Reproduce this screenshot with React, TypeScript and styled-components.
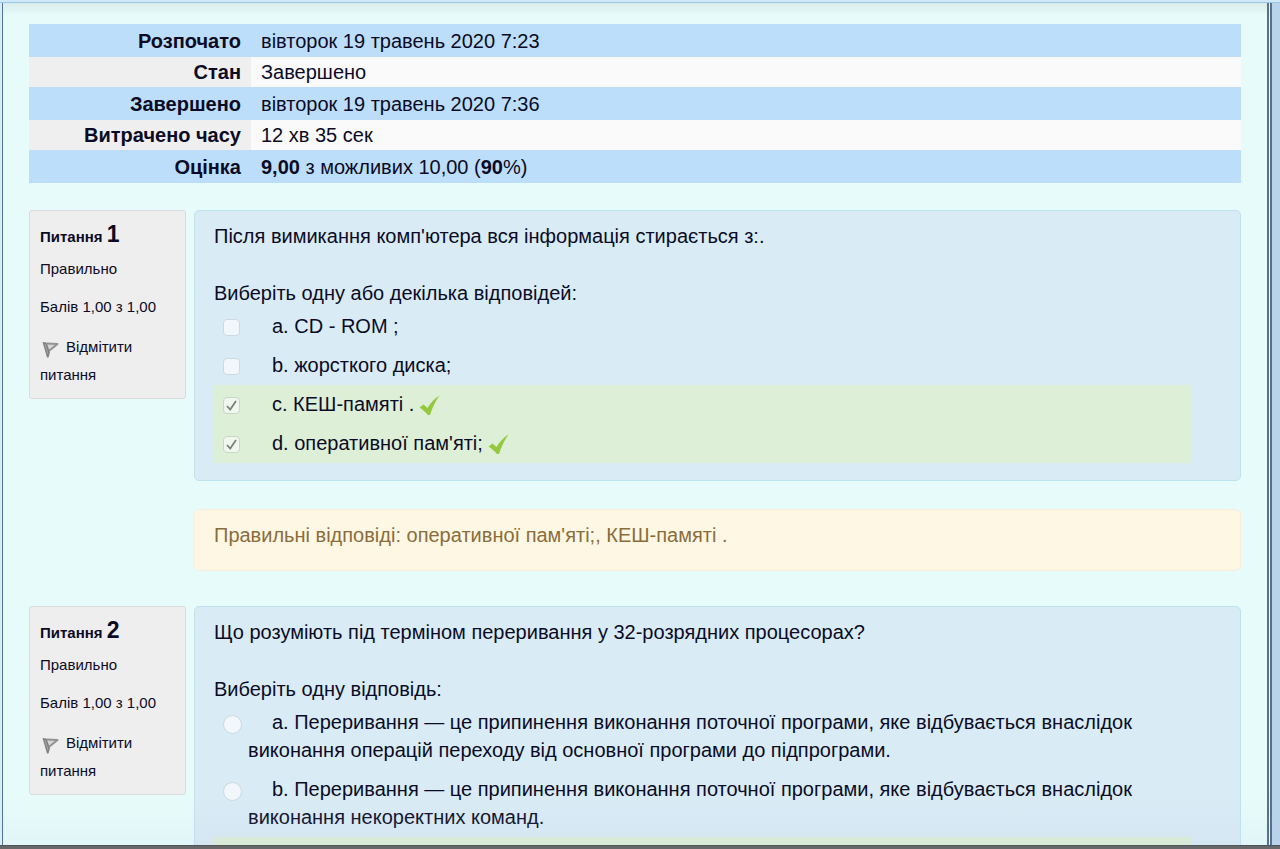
import React from "react";
import styled, { createGlobalStyle } from "styled-components";

const GlobalStyle = createGlobalStyle`
  * { box-sizing: border-box; }
  body {
    margin: 0;
    background: #b9d3ea;
    color: #0b0b26;
    font-family: "Liberation Sans", Arial, sans-serif;
    font-size: 20px;
    line-height: 28px;
  }
`;

const Window = styled.div`
  display: flex;
  flex-direction: column;
  height: 100vh;
  overflow: hidden;
`;

const TopBar = styled.div`
  flex: none;
  height: 3px;
  background: #cfe8fa;
  border-bottom: 1px solid #9cc6e2;
`;

const BottomBar = styled.div`
  flex: none;
  height: 4px;
  background: #666769;
  border-top: 1px solid #4d5356;
`;

const Viewport = styled.div`
  flex: 1;
  min-height: 0;
  display: flex;
  padding: 0 8px 0 2px;
  background: linear-gradient(to right, #d3effa 2px, #b9d3ea 2px);
`;

const Page = styled.main`
  position: relative;
  flex: 1;
  min-width: 0;
  overflow: hidden;
  padding: 21px 26px 0;
  background: #e7fcfa;
  border-left: 1px solid #54759a;
  border-right: 5px double #58718f;

  &::before,
  &::after {
    content: "";
    position: absolute;
    left: 0;
    right: 0;
    pointer-events: none;
  }
  &::before {
    top: 0;
    height: 12px;
    background: linear-gradient(to bottom, rgba(205, 225, 220, 0.6), rgba(205, 225, 220, 0));
  }
  &::after {
    bottom: 0;
    height: 48px;
    background: linear-gradient(to bottom, rgba(190, 205, 225, 0), rgba(190, 205, 225, 0.15));
  }
`;

const Summary = styled.table`
  width: 100%;
  border-collapse: collapse;
  margin-bottom: 27px;
`;

const SummaryRow = styled.tr`
  background: #fafafa;

  th {
    width: 222px;
    padding: 0 10px 0 0;
    background: #efefef;
    text-align: right;
    line-height: 30px;
  }
  td {
    padding: 0 10px;
    line-height: 30px;
  }
  &:nth-child(odd) {
    background: #bddefa;
  }
  &:nth-child(odd) th,
  &:nth-child(odd) td {
    background: #bddefa;
    padding-top: 1px;
    line-height: 32px;
  }
`;

const Question = styled.section`
  display: grid;
  grid-template-columns: 157px minmax(0, 1fr);
  column-gap: 8px;
  align-items: start;
  margin-bottom: 35px;
`;

const Info = styled.aside`
  min-height: 188px;
  padding: 9px 10px;
  border: 1px solid #d9dcda;
  border-radius: 3px;
  background: #eeeeee;
  font-size: 15px;
`;

const Heading = styled.h3`
  margin: 0 0 6px;
  font-size: 15px;
  line-height: 28px;

  span {
    font-size: 23px;
  }
`;

const InfoLine = styled.p`
  margin: 0 0 14px;
  line-height: 24px;
`;

const FlagLink = styled.a`
  display: block;
  color: inherit;
  text-decoration: none;
  line-height: 28px;

  svg {
    margin-right: 3px;
    vertical-align: -7px;
  }
`;

const Body = styled.div`
  min-width: 0;
`;

const Formulation = styled.div`
  padding: 11px 48px 17px 19px;
  border: 1px solid #bfe3ee;
  border-radius: 5px;
  background: #d9ebf5;
`;

const Text = styled.p`
  margin: 0 0 29px;
`;

const Answers = styled.fieldset`
  min-width: 0;
  margin: 0;
  padding: 0;
  border: 0;
`;

const Prompt = styled.legend`
  padding: 0;
`;

const AnswerRow = styled.label<{ $correct?: boolean }>`
  display: grid;
  grid-template-columns: 17px minmax(0, 1fr);
  column-gap: 8px;
  align-items: start;
  padding: 5px 0 6px 9px;
  background: ${(p) => (p.$correct ? "#ddefd6" : "transparent")};
`;

const AnswerText = styled.span`
  text-indent: 24px;

  svg {
    margin-left: 5px;
    vertical-align: -5px;
  }
`;

const Mark = styled.span`
  display: grid;
  place-items: center;
  padding-top: 7px;

  > * {
    grid-area: 1 / 1;
  }
`;

const Choice = styled.input<{ $round?: boolean }>`
  appearance: none;
  width: ${(p) => (p.$round ? "19px" : "17px")};
  height: ${(p) => (p.$round ? "19px" : "17px")};
  margin: 0;
  border: 1px solid #cdd9df;
  border-radius: ${(p) => (p.$round ? "50%" : "4px")};
  background: #f1f7fa;

  &:checked {
    border-color: #c9d6c6;
    background: #f0f7ee;
  }
`;

const Feedback = styled.div`
  min-height: 62px;
  margin-top: 28px;
  padding: 11px 19px;
  border: 1px solid #faeeda;
  border-radius: 5px;
  background: #fef7e3;
  color: #8a6d3b;
`;

const Flag = () => (
  <svg width="23" height="20" viewBox="0 0 23 20" fill="none" aria-hidden="true">
    <path d="M7 4.500L17.500 5L9.500 11.500" fill="#d6d6d6" stroke="#929292" strokeWidth="2" strokeLinejoin="round" />
    <path d="M2.500 3L6.500 3.500L10 13L8.500 18.500H7Z" fill="#808080" />
    <path d="M5 5L8 15" stroke="#a9a9a9" strokeWidth="1" />
  </svg>
);

const Correct = () => (
  <svg width="21" height="21" viewBox="0 0 21 21" role="img" aria-label="Правильно">
    <path d="M0.500 12.500L4.500 9.500L8.500 13C11.500 8 15.500 3.500 20.500 0.500C16.500 6 13.500 12.500 11 20H9C6.500 17 3.500 14.500 0.500 12.500Z" fill="#94c83d" />
  </svg>
);

const Tick = () => (
  <svg width="17" height="17" viewBox="0 0 17 17" fill="none" aria-hidden="true">
    <path d="M4 9L7.200 12.500L13 4" stroke="#78827a" strokeWidth="1.800" />
  </svg>
);

type Answer = { text: string; checked?: boolean; correct?: boolean };

type QuestionData = {
  number: number;
  text: string;
  prompt: string;
  type: "checkbox" | "radio";
  answers: Answer[];
  feedback: string;
};

const questions: QuestionData[] = [
  {
    number: 1,
    text: "Після вимикання комп'ютера вся інформація стирається з:.",
    prompt: "Виберіть одну або декілька відповідей:",
    type: "checkbox",
    answers: [
      { text: "a. CD - ROM ;" },
      { text: "b. жорсткого диска;" },
      { text: "c. КЕШ-памяті .", checked: true, correct: true },
      { text: "d. оперативної пам'яті;", checked: true, correct: true },
    ],
    feedback: "Правильні відповіді: оперативної пам'яті;, КЕШ-памяті .",
  },
  {
    number: 2,
    text: "Що розуміють під терміном переривання у 32-розрядних процесорах?",
    prompt: "Виберіть одну відповідь:",
    type: "radio",
    answers: [
      {
        text: "a. Переривання — це припинення виконання поточної програми, яке відбувається внаслідок виконання операцій переходу від основної програми до підпрограми.",
      },
      {
        text: "b. Переривання — це припинення виконання поточної програми, яке відбувається внаслідок виконання некоректних команд.",
      },
      { text: "", checked: true, correct: true },
    ],
    feedback: "",
  },
];

const QuestionBlock = ({ q }: { q: QuestionData }) => (
  <Question>
    <Info>
      <Heading>
        Питання <span>{q.number}</span>
      </Heading>
      <InfoLine>Правильно</InfoLine>
      <InfoLine>Балів 1,00 з 1,00</InfoLine>
      <FlagLink href="#flag">
        <Flag />
        Відмітити питання
      </FlagLink>
    </Info>
    <Body>
      <Formulation>
        <Text>{q.text}</Text>
        <Answers>
          <Prompt>{q.prompt}</Prompt>
          {q.answers.map((a, i) => (
            <AnswerRow key={i} $correct={a.correct}>
              <Mark>
                <Choice
                  type={q.type}
                  name={`q${q.number}`}
                  $round={q.type === "radio"}
                  defaultChecked={a.checked}
                  disabled
                />
                {a.checked && q.type === "checkbox" && <Tick />}
              </Mark>
              <AnswerText>
                {a.text}
                {a.correct && a.text && <Correct />}
              </AnswerText>
            </AnswerRow>
          ))}
        </Answers>
      </Formulation>
      {q.feedback && <Feedback>{q.feedback}</Feedback>}
    </Body>
  </Question>
);

export default function App() {
  return (
    <Window>
      <GlobalStyle />
      <TopBar />
      <Viewport>
        <Page>
          <Summary>
            <tbody>
              <SummaryRow>
                <th scope="row">Розпочато</th>
                <td>вівторок 19 травень 2020 7:23</td>
              </SummaryRow>
              <SummaryRow>
                <th scope="row">Стан</th>
                <td>Завершено</td>
              </SummaryRow>
              <SummaryRow>
                <th scope="row">Завершено</th>
                <td>вівторок 19 травень 2020 7:36</td>
              </SummaryRow>
              <SummaryRow>
                <th scope="row">Витрачено часу</th>
                <td>12 хв 35 сек</td>
              </SummaryRow>
              <SummaryRow>
                <th scope="row">Оцінка</th>
                <td>
                  <b>9,00</b> з можливих 10,00 (<b>90</b>%)
                </td>
              </SummaryRow>
            </tbody>
          </Summary>
          {questions.map((q) => (
            <QuestionBlock key={q.number} q={q} />
          ))}
        </Page>
      </Viewport>
      <BottomBar />
    </Window>
  );
}
